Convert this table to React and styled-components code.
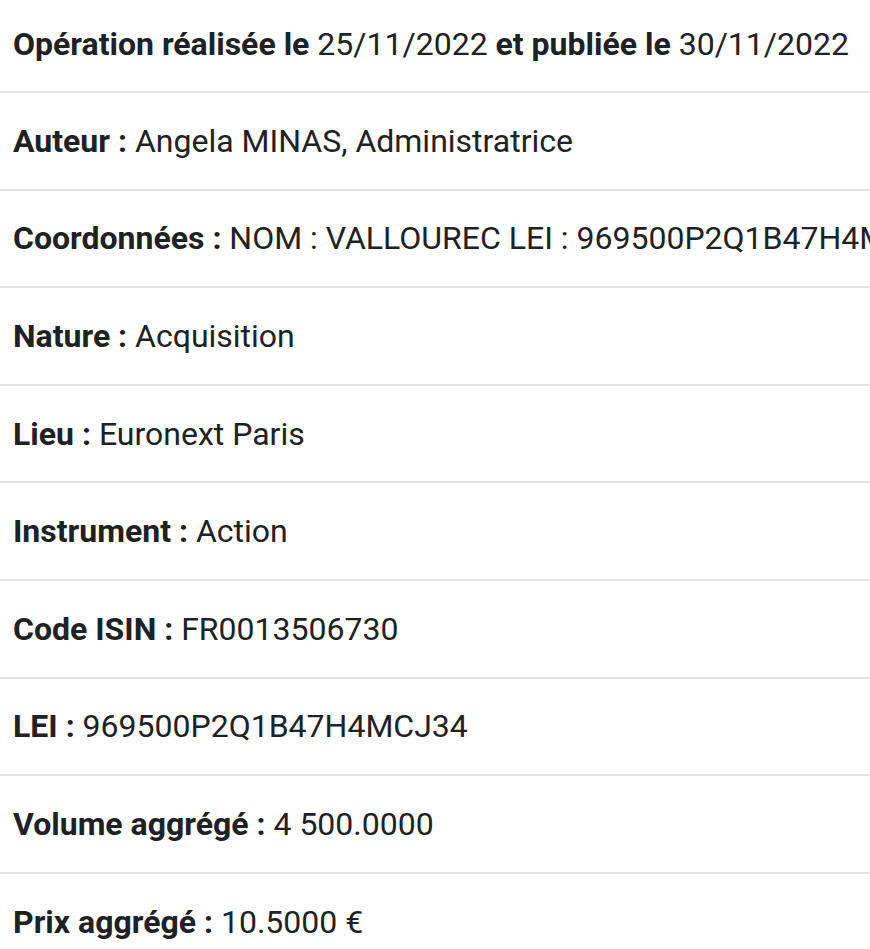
import React from 'react';
import styled, { createGlobalStyle } from 'styled-components';

const GlobalStyle = createGlobalStyle`
  html, body {
    margin: 0;
    padding: 0;
    background: #ffffff;
  }
  body {
    font-family: Roboto, "Noto Sans", Arial, sans-serif;
    color: #202124;
    overflow: hidden;
  }
`;

const List = styled.div`
  display: flex;
  flex-direction: column;
  width: 870px;
`;

const Row = styled.div`
  box-sizing: border-box;
  display: flex;
  align-items: center;
  flex-shrink: 0;
  height: 97.6px;
  padding: 0 13px;
  border-bottom: 2px solid #e3e3e3;
  font-size: 32px;
  white-space: nowrap;
  overflow: hidden;

  &:first-child {
    height: 93px;
    padding-bottom: 3px;
  }
`;

const Label = styled.b`
  font-weight: 700;
`;

const rows = [
  [['Opération réalisée le', true], [' 25/11/2022 ', false], ['et publiée le', true], [' 30/11/2022', false]],
  [['Auteur :', true], [' Angela MINAS, Administratrice', false]],
  [['Coordonnées :', true], [' NOM : VALLOUREC LEI : 969500P2Q1B47H4MCJ34', false]],
  [['Nature :', true], [' Acquisition', false]],
  [['Lieu :', true], [' Euronext Paris', false]],
  [['Instrument :', true], [' Action', false]],
  [['Code ISIN :', true], [' FR0013506730', false]],
  [['LEI :', true], [' 969500P2Q1B47H4MCJ34', false]],
  [['Volume aggrégé :', true], [' 4 500.0000', false]],
  [['Prix aggrégé :', true], [' 10.5000 €', false]],
];

export default function App() {
  return (
    <>
      <GlobalStyle />
      <List>
        {rows.map((parts, i) => (
          <Row key={i}>
            <span>
              {parts.map(([text, bold], j) =>
                bold ? <Label key={j}>{text}</Label> : <React.Fragment key={j}>{text}</React.Fragment>
              )}
            </span>
          </Row>
        ))}
      </List>
    </>
  );
}
